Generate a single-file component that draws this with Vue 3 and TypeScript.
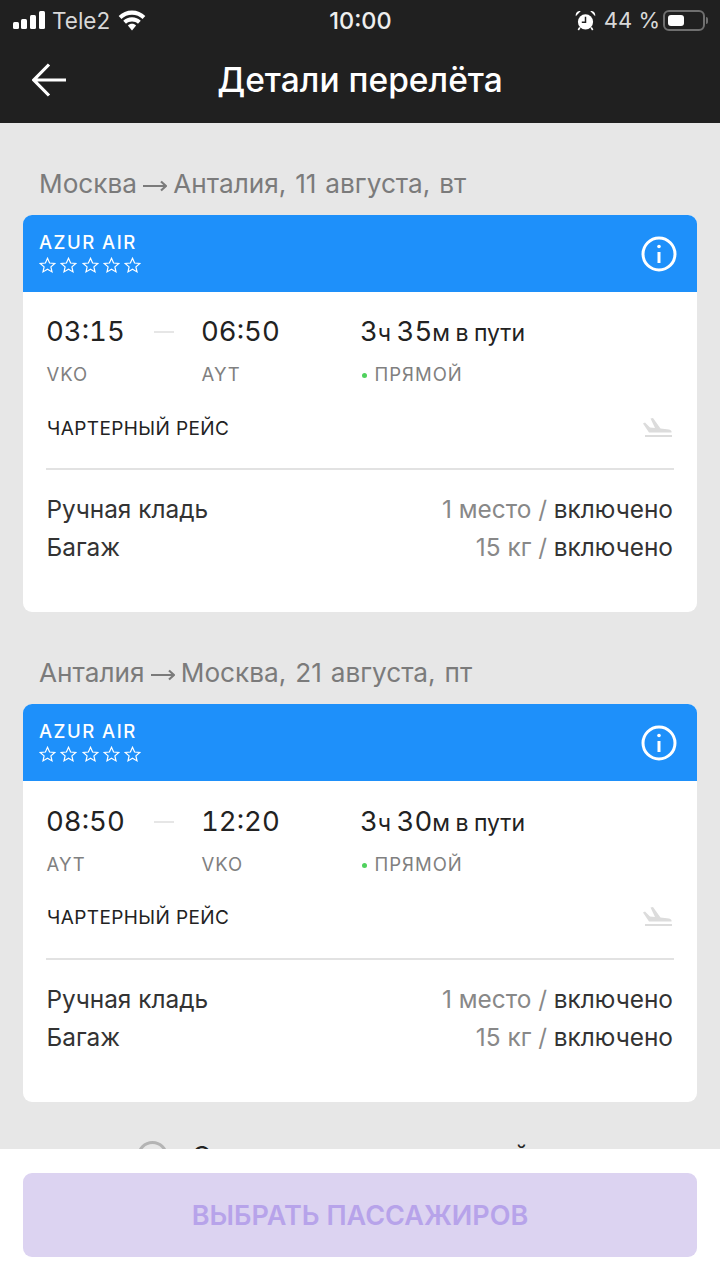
<script setup lang="ts">
interface Flight {
  title: [string, string]
  date: string
  from: string
  to: string
  fromCode: string
  toCode: string
  minutes: string
}

const flights: Flight[] = [
  { title: ['Москва', 'Анталия'], date: ', 11 августа, вт', from: '03:15', to: '06:50', fromCode: 'VKO', toCode: 'AYT', minutes: '35' },
  { title: ['Анталия', 'Москва'], date: ', 21 августа, пт', from: '08:50', to: '12:20', fromCode: 'AYT', toCode: 'VKO', minutes: '30' },
]

const baggage = [
  { name: 'Ручная кладь', amount: '1 место /', state: 'включено' },
  { name: 'Багаж', amount: '15 кг /', state: 'включено' },
]
</script>

<template>
  <div class="page">
    <header class="top">
      <div class="status">
        <div class="status-left">
          <svg class="signal" width="32" height="20" viewBox="0 0 32 20">
            <rect x="0" y="12" width="6" height="7" rx="1.5" />
            <rect x="8" y="9" width="6" height="10" rx="1.5" />
            <rect x="17" y="5" width="6" height="14" rx="1.5" />
            <rect x="26" y="1" width="6" height="18" rx="1.5" />
          </svg>
          <span class="carrier">Tele2</span>
          <svg class="wifi" width="28" height="21" viewBox="2.500 1.500 23 17.500">
            <path d="M14 5.500c3.400 0 6.500 1.300 8.800 3.500l2.300-2.500C22.200 3.700 18.300 2 14 2S5.800 3.700 2.900 6.500l2.300 2.500C7.500 6.800 10.600 5.500 14 5.500z" />
            <path d="M14 11c1.900 0 3.700.7 5 2l2.300-2.500C19.400 8.700 16.800 7.600 14 7.600s-5.400 1.100-7.300 2.900L9 13c1.300-1.300 3.100-2 5-2z" />
            <path d="M14 13c-1.300 0-2.500.5-3.400 1.400L14 18.500l3.400-4.100C16.500 13.500 15.300 13 14 13z" />
          </svg>
        </div>
        <span class="clock">10:00</span>
        <div class="status-right">
          <svg class="alarm" width="21" height="21" viewBox="0 0 21 21">
            <circle cx="10.500" cy="11.800" r="7.600" />
            <path d="M.8 6.300C.2 3 2.500.6 5.800 1.100zM20.200 6.300c.6-3.300-1.700-5.700-5-5.200z" />
            <path d="M10.500 6.800v5.500H6.800" class="alarm-hand" />
            <path d="M4.800 17.500 3.300 20M16.200 17.500l1.500 2.500" class="alarm-foot" />
          </svg>
          <span class="percent">44 %</span>
          <div class="battery"><div class="battery-fill"></div></div>
          <div class="battery-cap"></div>
        </div>
      </div>
      <div class="nav">
        <svg class="back" width="36" height="34" viewBox="0 0 36 34">
          <path d="M34 17H2M17 1.500 1.800 17 17 32.500" />
        </svg>
        <h1 class="nav-title">Детали перелёта</h1>
      </div>
    </header>

    <main class="content">
      <section v-for="flight in flights" :key="flight.from" class="flight">
        <h2 class="route">
          {{ flight.title[0] }}
          <svg class="route-arrow" width="24" height="14" viewBox="0 0 24 14">
            <path d="M0 7h23M18 2.500 23 7l-5 4.500" />
          </svg>
          {{ flight.title[1] }}<span class="route-date">{{ flight.date }}</span>
        </h2>
        <article class="card">
          <div class="airline">
            <div class="airline-left">
              <div class="airline-name">AZUR AIR</div>
              <div class="stars">
                <svg v-for="n in 5" :key="n" width="17" height="17" viewBox="0 0 17 17">
                  <path d="M8.500 1.300l2.100 4.700 5.100.5-3.800 3.400 1.100 5-4.500-2.600L4 14.900l1.100-5L1.300 6.500l5.100-.5z" />
                </svg>
              </div>
            </div>
            <svg class="info" width="36" height="36" viewBox="0 0 36 36">
              <circle cx="18" cy="18" r="16" />
              <path d="M18 16v11" />
              <circle class="info-dot" cx="18" cy="10.500" r="1.800" />
            </svg>
          </div>
          <div class="card-body">
            <div class="times">
              <div class="time">
                {{ flight.from }}
                <span class="dash"></span>
              </div>
              <div class="time">{{ flight.to }}</div>
              <div class="duration"><b>3</b>ч <b>{{ flight.minutes }}</b>м в пути</div>
              <div class="code">{{ flight.fromCode }}</div>
              <div class="code">{{ flight.toCode }}</div>
              <div class="code"><span class="dot"></span>ПРЯМОЙ</div>
            </div>
            <div class="charter">
              <span>ЧАРТЕРНЫЙ РЕЙС</span>
              <svg width="29" height="20" viewBox="0 0 29 20">
                <path d="M0 5.500 2 4.500 7 9.500 12 10 7.500 0.500 10 0 17.500 10.500 26 11.500c2 .5 3 1.500 2.500 3L6 14.500z" />
                <rect x="2" y="17" width="27" height="2" />
              </svg>
            </div>
            <div class="baggage">
              <div v-for="item in baggage" :key="item.name" class="baggage-row">
                <span>{{ item.name }}</span>
                <span><span class="amount">{{ item.amount }}</span> {{ item.state }}</span>
              </div>
            </div>
          </div>
        </article>
      </section>
      <div class="track">
        <span class="radio"></span>
        <span>Следить за ценами на рейсы</span>
      </div>
    </main>

    <footer class="bottom">
      <button class="primary" type="button">ВЫБРАТЬ ПАССАЖИРОВ</button>
    </footer>
  </div>
</template>

<style>
html,
body {
  margin: 0;
  background: #e7e7e7;
}
</style>

<style scoped>
.page {
  display: flex;
  flex-direction: column;
  width: 720px;
  height: 1280px;
  overflow: hidden;
  background: #e7e7e7;
  font-family: Inter, "Noto Sans", sans-serif;
  color: #222;
}

.top {
  flex: none;
  height: 123px;
  background: #202020;
  color: #fff;
}

.status {
  display: grid;
  grid-template-columns: 1fr auto 1fr;
  align-items: center;
  height: 40px;
  padding: 0 12px 0 13px;
}

.status-left,
.status-right {
  display: flex;
  align-items: center;
}

.status-right {
  justify-content: flex-end;
}

.signal {
  fill: #fff;
}

.carrier {
  margin-left: 7px;
  font-size: 22.500px;
  color: #d8d8d8;
}

.wifi {
  margin-left: 8px;
  fill: #fff;
}

.clock {
  font-size: 23.500px;
  font-weight: 500;
  color: #eee;
}

.alarm {
  fill: #fff;
}

.alarm-hand {
  fill: none;
  stroke: #202020;
  stroke-width: 1.500;
}

.alarm-foot {
  fill: none;
  stroke: #fff;
  stroke-width: 1.600;
}

.percent {
  margin-left: 8px;
  font-size: 22px;
  color: #d8d8d8;
}

.battery {
  width: 42px;
  height: 21px;
  margin-left: 3px;
  padding: 3px;
  box-sizing: border-box;
  border: 2px solid #6f6f6f;
  border-radius: 6px;
}

.battery-fill {
  width: 16px;
  height: 100%;
  border-radius: 3px;
  background: #fff;
}

.battery-cap {
  width: 2px;
  height: 7px;
  margin-left: 1px;
  border-radius: 0 2px 2px 0;
  background: #6f6f6f;
}

.nav {
  position: relative;
  display: flex;
  align-items: center;
  justify-content: center;
  height: 83px;
  padding-bottom: 4px;
  box-sizing: border-box;
}

.back {
  position: absolute;
  left: 32px;
  top: 23px;
  fill: none;
  stroke: #fff;
  stroke-width: 3.200;
}

.nav-title {
  margin: 0;
  font-size: 33.500px;
  font-weight: 500;
  line-height: 40px;
}

.content {
  flex: 1;
  min-height: 0;
  overflow: hidden;
  padding: 0 23px;
}

.flight {
  padding-top: 42px;
}

.route {
  margin: 0 0 12px 16px;
  font-size: 26.200px;
  font-weight: 400;
  line-height: 38px;
  color: #7b7b7b;
}

.route-date {
  word-spacing: 1.500px;
}

.route-arrow {
  margin: 0 -1.500px 0 -1px;
  fill: none;
  stroke: #7b7b7b;
  stroke-width: 2.200;
}

.card {
  height: 397px;
  overflow: hidden;
  border-radius: 9px;
  background: #fff;
}

.flight + .flight .card {
  height: 398px;
}

.airline {
  display: flex;
  align-items: center;
  justify-content: space-between;
  height: 77px;
  padding: 0 20px 0 16px;
  background: #1e90fa;
  color: #fff;
}

.airline-left {
  margin-bottom: 2px;
}

.airline-name {
  font-size: 18.500px;
  font-weight: 500;
  letter-spacing: 1.500px;
  line-height: 22px;
}

.stars {
  display: flex;
  gap: 4.300px;
  margin-top: 4px;
}

.stars svg {
  fill: none;
  stroke: #fff;
  stroke-width: 1.200;
}

.info {
  fill: none;
  stroke: #fff;
  stroke-width: 3;
}

.info-dot {
  fill: #fff;
  stroke: none;
}

.card-body {
  padding: 0 23px;
}

.times {
  display: grid;
  grid-template-columns: 155px 159px 1fr;
  grid-template-rows: 62px 24px;
  align-items: center;
  padding-top: 8px;
}

.flight + .flight .times {
  padding-top: 9px;
}

.time {
  position: relative;
  font-size: 27.500px;
  font-variant-numeric: tabular-nums;
}

.dash {
  position: absolute;
  left: 108px;
  top: 50%;
  width: 20px;
  height: 2px;
  background: #e6e6e6;
}

.duration {
  font-size: 23px;
  word-spacing: -1px;
  white-space: nowrap;
}

.duration b {
  font-size: 27.500px;
  font-weight: 400;
  font-variant-numeric: tabular-nums;
}

.code {
  display: flex;
  align-items: center;
  padding-left: 0.500px;
  font-size: 18.500px;
  letter-spacing: 1px;
  line-height: 24px;
  color: #808080;
}

.dot {
  width: 5px;
  height: 5px;
  margin: 2px 8px 0 1px;
  border-radius: 50%;
  background: #4fd15d;
}

.charter {
  display: flex;
  align-items: center;
  justify-content: space-between;
  height: 84px;
  padding: 2px 0 0 1px;
  box-sizing: border-box;
  font-size: 19px;
  letter-spacing: 0.400px;
  border-bottom: 2px solid #e2e2e2;
}

.flight + .flight .charter {
  padding-top: 0;
}

.charter svg {
  fill: #dcdcdc;
  margin-right: 2px;
}

.baggage {
  padding: 20px 1px 0 0.500px;
}

.baggage-row {
  display: flex;
  justify-content: space-between;
  font-size: 24.400px;
  line-height: 38px;
  color: #333;
}

.amount {
  color: #888;
}

.track {
  display: flex;
  align-items: center;
  gap: 24px;
  margin-top: 37px;
  padding-left: 114px;
  font-size: 26px;
  line-height: 34px;
  white-space: nowrap;
}

.radio {
  flex: none;
  width: 31px;
  height: 31px;
  box-sizing: border-box;
  border: 3px solid #b4b4b4;
  border-radius: 50%;
}

.bottom {
  flex: none;
  height: 131px;
  padding: 24px 23px 0;
  box-sizing: border-box;
  background: #fff;
}

.primary {
  display: block;
  width: 100%;
  height: 84px;
  border: 0;
  border-radius: 9px;
  background: #dcd3f1;
  color: #b7a3ea;
  font-family: inherit;
  font-size: 27px;
  font-weight: 600;
}
</style>
